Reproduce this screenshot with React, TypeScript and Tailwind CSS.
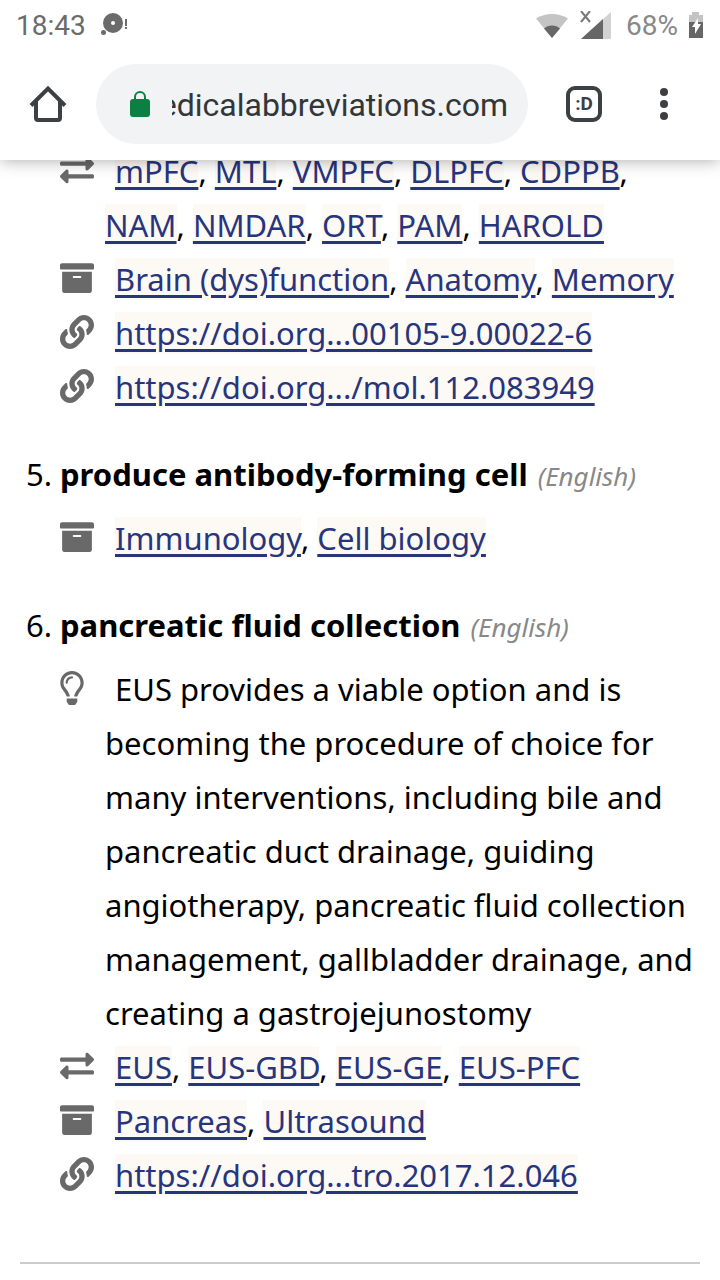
import { ReactNode } from 'react';
import { FaArchive, FaExchangeAlt, FaLink, FaRegLightbulb } from 'react-icons/fa';

interface Detail {
  kind: 'related' | 'topic' | 'source' | 'note';
  links?: string[];
  text?: string;
}

interface Entry {
  number: number;
  term?: string;
  language: string;
  details: Detail[];
}

const entries: Entry[] = [
  {
    number: 4,
    language: 'English',
    details: [
      {
        kind: 'related',
        links: ['mPFC', 'MTL', 'VMPFC', 'DLPFC', 'CDPPB', 'NAM', 'NMDAR', 'ORT', 'PAM', 'HAROLD'],
      },
      { kind: 'topic', links: ['Brain (dys)function', 'Anatomy', 'Memory'] },
      { kind: 'source', links: ['https://doi.org...00105-9.00022-6'] },
      { kind: 'source', links: ['https://doi.org.../mol.112.083949'] },
    ],
  },
  {
    number: 5,
    term: 'produce antibody-forming cell',
    language: 'English',
    details: [{ kind: 'topic', links: ['Immunology', 'Cell biology'] }],
  },
  {
    number: 6,
    term: 'pancreatic fluid collection',
    language: 'English',
    details: [
      {
        kind: 'note',
        text: 'EUS provides a viable option and is becoming the procedure of choice for many interventions, including bile and pancreatic duct drainage, guiding angiotherapy, pancreatic fluid collection management, gallbladder drainage, and creating a gastrojejunostomy',
      },
      { kind: 'related', links: ['EUS', 'EUS-GBD', 'EUS-GE', 'EUS-PFC'] },
      { kind: 'topic', links: ['Pancreas', 'Ultrasound'] },
      { kind: 'source', links: ['https://doi.org...tro.2017.12.046'] },
    ],
  },
];

const icons: Record<Detail['kind'], ReactNode> = {
  related: <FaExchangeAlt size={34} />,
  topic: <FaArchive size={34} />,
  source: <FaLink size={34} />,
  note: <FaRegLightbulb className="h-[34px] w-6" />,
};

function StatusBar() {
  return (
    <div className="flex h-12 items-center justify-between px-4 pt-1 text-[28px] text-[#6b6b6b]">
      <div className="flex items-center gap-[14px]">
        <span>18:43</span>
        <svg width="28" height="26" viewBox="0 0 28 26" fill="currentColor">
          <path fillRule="evenodd" d="M13 0a10 10 0 1 0 0 20 10 10 0 0 0 0-20zm0 8a2 2 0 1 1 0 4 2 2 0 0 1 0-4z" />
          <circle cx="3.500" cy="19.500" r="2.500" />
          <path d="M25 6h2v7h-2zM25 14h2v2h-2z" />
        </svg>
      </div>
      <div className="flex items-center">
        <svg width="32" height="26" viewBox="0 0 32 26">
          <path d="M16 25 0 5.500C9-.5 23-.5 32 5.500z" fill="#c4c4c4" />
          <path d="M16 25 8 15.500c4-4 12-4 16 0z" fill="#666" />
        </svg>
        <svg className="ml-3" width="32" height="30" viewBox="0 0 32 30">
          <path d="M31 1v27H1z" fill="#d2d2d2" />
          <path d="M23 8v20H1z" fill="#666" />
          <path d="m1 0 9 11M10 0 1 11" stroke="#777" strokeWidth="2" />
        </svg>
        <span className="ml-[14px] text-[#888]">68%</span>
        <svg className="ml-[10px]" width="16" height="28" viewBox="0 0 16 28">
          <path d="M4 0h7v3h4v7H1V3h3z" fill="#c4c4c4" />
          <path d="M1 10h14v16H1z" fill="#666" />
          <path d="M10 6v6h3L7 22v-7H4z" fill="#fff" />
        </svg>
      </div>
    </div>
  );
}

function Toolbar() {
  return (
    <div className="flex h-28 items-center text-[#3c4043]">
      <button aria-label="Home" className="flex h-20 w-24 items-center justify-center">
        <svg width="38" height="38" viewBox="0 0 38 38" fill="none" stroke="currentColor" strokeWidth="4">
          <path d="M2 20.500 19 3.500l17 17" />
          <path d="M7 16v17a2 2 0 0 0 2 2h20a2 2 0 0 0 2-2V16" />
        </svg>
      </button>
      <div className="flex h-20 min-w-0 flex-1 items-center rounded-full bg-[#f1f3f4] pr-5 pl-[34px]">
        <svg width="20" height="26" viewBox="0 0 20 26" className="shrink-0">
          <path d="M5 10V6a5 5 0 0 1 10 0v4" fill="none" stroke="#0b8043" strokeWidth="2" />
          <rect y="8" width="20" height="18" rx="3" fill="#0b8043" />
        </svg>
        {/* rtl keeps the end of a long address in view */}
        <input
          type="text"
          dir="rtl"
          aria-label="Address"
          defaultValue="medicalabbreviations.com"
          className="ml-[22px] min-w-0 flex-1 bg-transparent pt-[2px] text-[32px] text-[#333639] outline-none"
        />
      </div>
      <button
        aria-label="Tabs"
        className="ml-[38px] flex size-9 items-center justify-center rounded-[9px] border-4 border-current text-[19px] font-bold"
      >
        :D
      </button>
      <button aria-label="More options" className="flex h-20 w-[118px] items-center justify-center pl-[6px]">
        <svg width="8" height="32" viewBox="0 0 8 32" fill="currentColor">
          <circle cx="4" cy="4" r="4" />
          <circle cx="4" cy="16" r="4" />
          <circle cx="4" cy="28" r="4" />
        </svg>
      </button>
    </div>
  );
}

function DetailRow({ detail }: { detail: Detail }) {
  return (
    <li className="pl-[45px] -indent-[45px]">
      <span className="inline-flex w-[55px] align-[-4px] indent-0 text-[#696969]">{icons[detail.kind]}</span>
      {detail.text}
      {detail.links?.map((link, i) => (
        <span key={link}>
          {i > 0 && ', '}
          <a href="#" className="bg-[#fdf9f4] text-[#26357d] underline decoration-3 underline-offset-4">
            {link}
          </a>
        </span>
      ))}
    </li>
  );
}

export default function App() {
  return (
    <div className="min-h-screen overflow-hidden bg-white">
      <header className="relative z-10 bg-white font-['Roboto',sans-serif] shadow-[0_0_16px_rgba(0,0,0,0.35)]">
        <StatusBar />
        <Toolbar />
      </header>

      {/* The list is scrolled, its first line runs under the header */}
      <main className="-mt-4 px-5 font-['Noto_Sans',sans-serif] text-[31px] leading-[54px] text-black">
        <ol className="flex flex-col gap-[33px] border-b-2 border-[#ccc] pb-[60px]">
          {entries.map((entry) => (
            <li key={entry.number} className="pl-10">
              {entry.term && (
                <h2 className="mb-[10px] -ml-[34px] flex items-baseline">
                  <span className="w-[34px]">{entry.number}.</span>
                  <strong className="font-bold">{entry.term}</strong>
                  <em className="ml-[10px] text-[26px] leading-none text-[#888]">({entry.language})</em>
                </h2>
              )}
              <ul>
                {entry.details.map((detail, i) => (
                  <DetailRow key={i} detail={detail} />
                ))}
              </ul>
            </li>
          ))}
        </ol>
      </main>
    </div>
  );
}
